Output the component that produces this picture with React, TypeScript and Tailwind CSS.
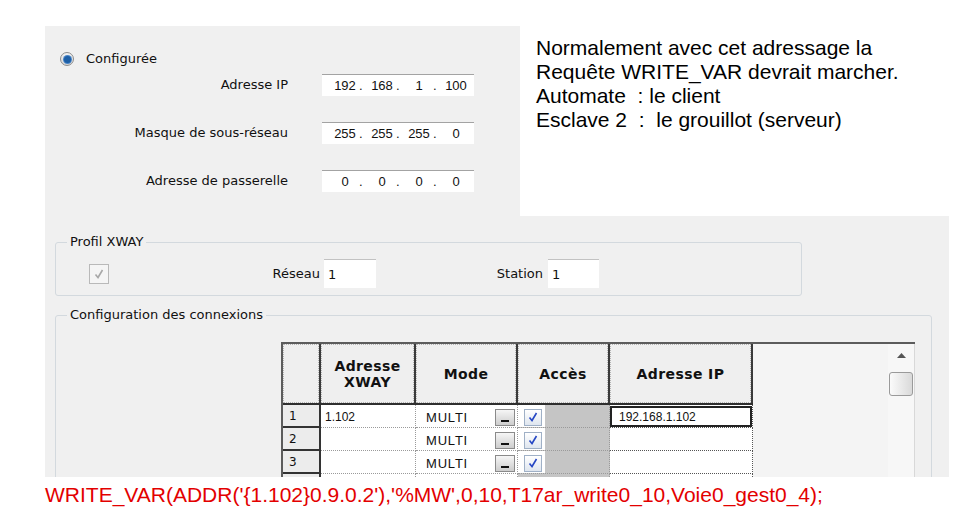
import React from 'react';

const ipRows = [
  { label: 'Adresse IP', parts: ['192', '168', '1', '100'] },
  { label: 'Masque de sous-réseau', parts: ['255', '255', '255', '0'] },
  { label: 'Adresse de passerelle', parts: ['0', '0', '0', '0'] },
];

const rows = [
  { n: '1', xway: '1.102', ip: '192.168.1.102' },
  { n: '2', xway: '', ip: '' },
  { n: '3', xway: '', ip: '' },
];

function IpField({ parts }: { parts: string[] }) {
  return (
    <div className="flex h-[22px] w-[152px] items-center border-t border-[#a3a3a3] bg-white pl-[10px] font-['Liberation_Sans',Arial,sans-serif] text-[13px] leading-[16px]">
      {parts.map((p, i) => (
        <div key={i} className="flex w-[37px] items-center">
          <span className="w-[26px] text-center">{p}</span>
          {i < 3 && <span className="w-[11px] pl-[1px]">.</span>}
        </div>
      ))}
    </div>
  );
}

function Check({ color }: { color: string }) {
  return (
    <svg width="12" height="12" viewBox="0 0 12 12">
      <path d="M2.5 6.5 L5 9.5 L9.5 2" fill="none" stroke={color} strokeWidth="1.6" />
    </svg>
  );
}

function HeadCell({ w, children }: { w: string; children: React.ReactNode }) {
  return (
    <div className={`${w} h-full border-r-2 border-[#3a3a3a]`}>
      <div className="flex h-full items-center justify-center border border-dotted border-[#b3b3b3] bg-[#efefef] text-center text-[14px] font-bold leading-[16px] tracking-[0.4px]">
        {children}
      </div>
    </div>
  );
}

function DropButton() {
  return (
    <div className="flex h-[17px] w-[20px] items-end justify-center border border-[#8a8a8a] bg-gradient-to-b from-[#f6f6f6] to-[#cdcdcd] pb-[3px]">
      <div className="h-[2px] w-[8px] bg-[#111]" />
    </div>
  );
}

export default function App() {
  return (
    <div className="h-[530px] w-[970px] overflow-hidden bg-white font-['DejaVu_Sans',sans-serif] text-[#111]">
      <div className="flex">
        <div className="ml-[45px] mt-[26px] h-[190px] w-[475px] bg-[#f0f0f0]">
          <div className="flex items-center pl-[15px] pt-[25px] text-[13px] leading-[16px]">
            <div className="flex h-[14px] w-[14px] items-center justify-center rounded-full border border-[#8c8c8c] bg-gradient-to-b from-[#f2f2f2] to-[#d6d6d6]">
              <div className="h-[7px] w-[7px] rounded-full bg-[#1d5fa6] ring-1 ring-[#4a86c8]" />
            </div>
            <span className="ml-[12px]">Configurée</span>
          </div>
          <div className="mt-[7px] flex flex-col gap-[26px]">
            {ipRows.map((r) => (
              <div key={r.label} className="flex items-center">
                <span className="w-[243px] text-right text-[13px] leading-[16px]">{r.label}</span>
                <div className="ml-[34px]">
                  <IpField parts={r.parts} />
                </div>
              </div>
            ))}
          </div>
        </div>
        <div className="h-[216px] w-[429px] whitespace-pre pl-[16px] pt-[36px] font-['Liberation_Sans',Arial,sans-serif] text-[21px] leading-[24px] text-black">
          <p>Normalement avec cet adressage la</p>
          <p>Requête WRITE_VAR devrait marcher.</p>
          <p>Automate  : le client</p>
          <p>Esclave 2  :  le grouillot (serveur)</p>
        </div>
      </div>

      <div className="ml-[45px] h-[261px] w-[904px] overflow-hidden bg-[#f0f0f0] pt-[18px] text-[13px] leading-[16px]">
        <fieldset className="ml-[10px] w-[747px] rounded-[3px] border border-[#d3d9de] pb-[7px] pt-[9px]">
          <legend className="ml-[11px] px-[3px]">Profil XWAY</legend>
          <div className="flex items-center">
            <div className="ml-[33px] flex h-[20px] w-[20px] items-center justify-center border border-[#b9b9b9] bg-[#f5f5f5]">
              <Check color="#a8a8a8" />
            </div>
            <span className="w-[211px] text-right">Réseau</span>
            <div className="ml-[4px] h-[29px] w-[52px] border-t border-[#c2c2c2] bg-white pl-[4px] pt-[7px]">1</div>
            <span className="w-[167px] text-right">Station</span>
            <div className="ml-[5px] h-[29px] w-[51px] border-t border-[#c2c2c2] bg-white pl-[4px] pt-[7px]">1</div>
          </div>
        </fieldset>

        <fieldset className="ml-[10px] mt-[11px] w-[877px] rounded-[3px] border border-[#d3d9de] pl-[225px] pr-[16px] pt-[19px]">
          <legend className="-ml-[214px] px-[3px]">Configuration des connexions</legend>
          <div className="flex h-[200px] w-[634px] border-l-2 border-t-2 border-[#5c5c5c] bg-[#f4f4f4]">
            <div className="flex flex-col">
              <div className="flex h-[61px] border-b-2 border-[#2e2e2e]">
                <HeadCell w="w-[38px]">{''}</HeadCell>
                <HeadCell w="w-[95px]">
                  <span>
                    Adresse
                    <br />
                    XWAY
                  </span>
                </HeadCell>
                <HeadCell w="w-[102px]">Mode</HeadCell>
                <HeadCell w="w-[92px]">Accès</HeadCell>
                <HeadCell w="w-[143px]">Adresse IP</HeadCell>
              </div>
              {rows.map((r) => (
                <div key={r.n} className="flex h-[23px] text-[12px] leading-[21px]">
                  <div className="w-[38px] border-b-2 border-r-2 border-[#333] bg-[#ececec] pl-[6px] pt-[2px] leading-[18px]">{r.n}</div>
                  <div className="w-[95px] border-b border-r border-dotted border-[#9a9a9a] bg-white pl-[4px] pt-[2px] font-['Liberation_Sans',Arial,sans-serif]">
                    {r.xway}
                  </div>
                  <div className="flex w-[102px] items-center justify-between border-b border-r border-dotted border-[#9a9a9a] bg-white pl-[10px] pr-[2px] pt-[2px] font-['Liberation_Sans',Arial,sans-serif] text-[13px] tracking-[0.8px]">
                    <span>MULTI</span>
                    <DropButton />
                  </div>
                  <div className="flex w-[92px] border-b border-r border-dotted border-[#9a9a9a] bg-[#c5c5c5]">
                    <div className="flex h-full w-[27px] items-center bg-white pl-[6px] pt-[2px]">
                      <div className="flex h-[17px] w-[18px] items-center justify-center border border-[#9fb0c6] bg-gradient-to-b from-white to-[#dfe6ef]">
                        <Check color="#2647c4" />
                      </div>
                    </div>
                  </div>
                  <div className="w-[143px] border-b border-r border-dotted border-[#555] bg-white pt-[1px] font-['Liberation_Sans',Arial,sans-serif]">
                    {r.ip && (
                      <div className="h-full border-2 border-[#222] pl-[7px] leading-[18px]">{r.ip}</div>
                    )}
                  </div>
                </div>
              ))}
              <div className="flex h-[23px]">
                <div className="w-[38px] border-r-2 border-[#333] bg-[#ececec]" />
                <div className="w-[95px] border-r border-dotted border-[#9a9a9a] bg-white" />
                <div className="w-[102px] border-r border-dotted border-[#9a9a9a] bg-white" />
                <div className="w-[92px] border-r border-dotted border-[#9a9a9a] bg-[#c5c5c5]" />
                <div className="w-[143px] border-r border-dotted border-[#555] bg-white" />
              </div>
            </div>
            <div className="flex-1" />
            <div className="flex w-[27px] flex-col items-center border-r border-[#d8d8d8] bg-[#f7f7f7]">
              <svg className="mt-[9px]" width="9" height="5" viewBox="0 0 9 5">
                <path d="M0 5 L4.5 0 L9 5 Z" fill="#555" />
              </svg>
              <div className="mt-[14px] h-[24px] w-[24px] rounded-[3px] border border-[#9a9a9a] bg-gradient-to-r from-[#fbfbfb] to-[#d9d9d9]" />
            </div>
          </div>
        </fieldset>
      </div>

      <p className="ml-[45px] mt-[6px] font-['Liberation_Sans',Arial,sans-serif] text-[21px] leading-[24px] text-[#e30000]">
        WRITE_VAR(ADDR('{'{'}1.102{'}'}0.9.0.2'),'%MW',0,10,T17ar_write0_10,Voie0_gest0_4);
      </p>
    </div>
  );
}
